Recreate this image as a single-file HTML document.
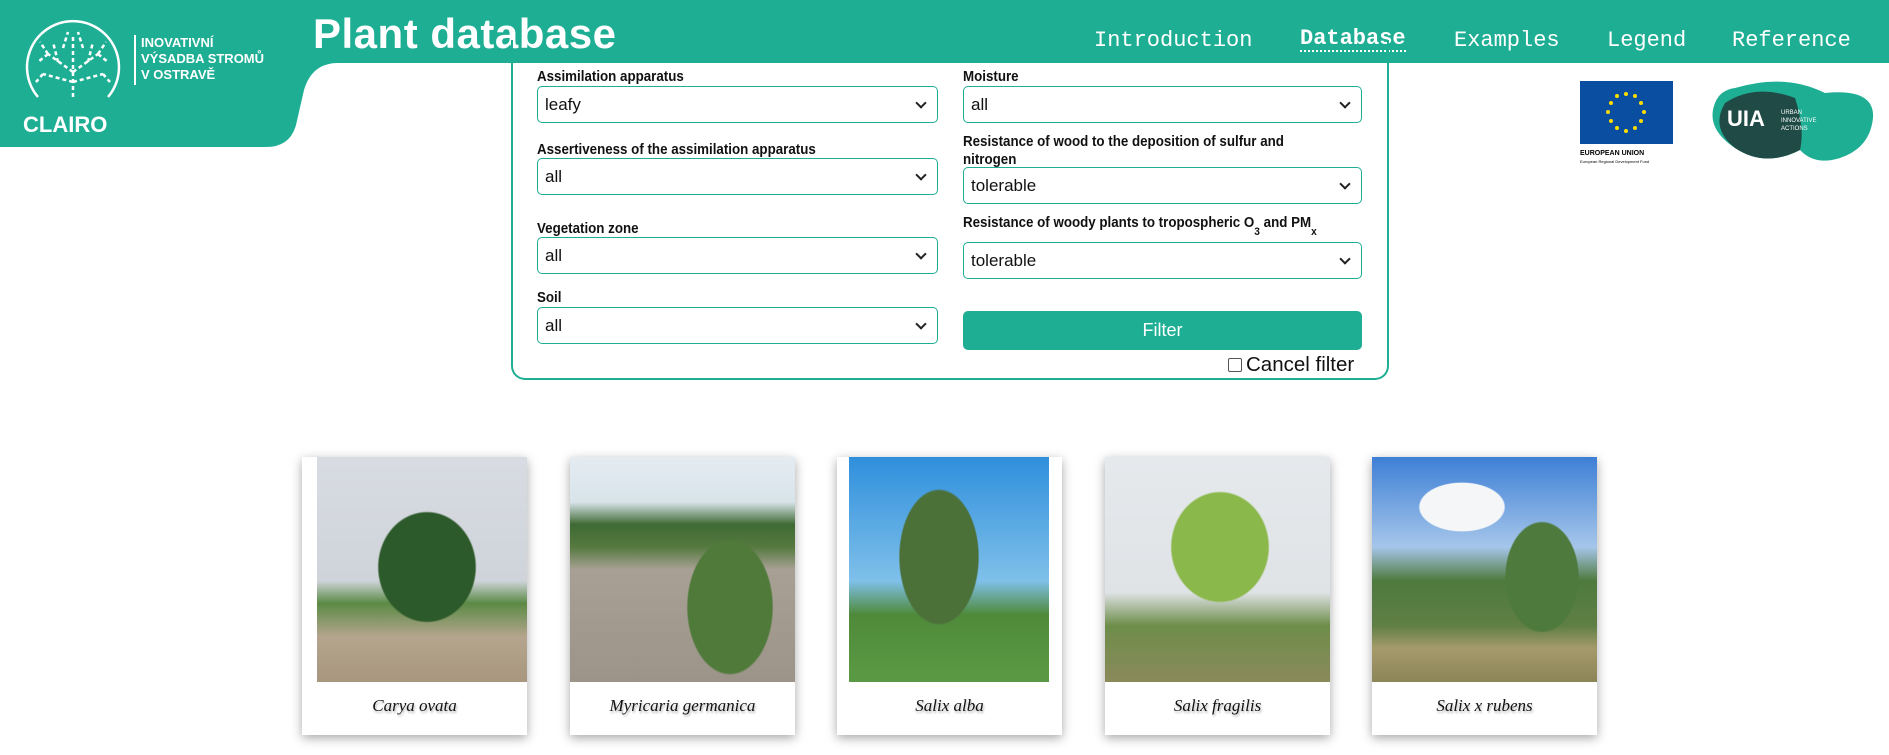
<!DOCTYPE html>
<html><head><meta charset="utf-8"><style>
*{box-sizing:border-box;margin:0;padding:0}
body{width:1889px;height:755px;overflow:hidden;background:#fff;font-family:"Liberation Sans",sans-serif;position:relative}
.bar{position:absolute;left:0;top:0;width:1889px;height:63px;background:#1eae94}
.logoblk{position:absolute;left:0;top:0;width:400px;height:147px;background:#1eae94;clip-path:path('M0 0 H400 V63 H338 Q312 63 304 90 L296 125 Q290 147 266 147 H0 Z')}
.title{position:absolute;left:313px;top:10px;color:#fff;font-weight:bold;font-size:42px;letter-spacing:0.5px}
.nav{position:absolute;top:28px;color:#fff;font-family:"Liberation Mono",monospace;font-size:22px}
.nav.b{font-weight:bold;border-bottom:2px dotted #fff;line-height:22px}
.form{position:absolute;left:511px;top:40px;width:878px;height:340px;border:2px solid #1eae94;border-top:none;border-radius:0 0 14px 14px}
.lbl{position:absolute;font-size:14.5px;font-weight:bold;color:#111;line-height:18px;transform:scaleX(0.92);transform-origin:left}
.sel{position:absolute;height:37px;border:1px solid #1eae94;border-radius:5px;font-size:17px;color:#111;padding:8px 7px;line-height:20px}
.sel:after{content:"";position:absolute;right:12px;top:12px;width:6px;height:6px;border-right:2px solid #222;border-bottom:2px solid #222;transform:rotate(45deg)}
.L{left:537px;width:401px}.R{left:963px;width:399px}
.btn{position:absolute;left:963px;top:311px;width:399px;height:39px;background:#1eae94;border-radius:5px;color:#fff;font-size:18px;text-align:center;line-height:39px}
.card{position:absolute;top:457px;width:225px;height:278px;background:#fff;box-shadow:0 3px 10px rgba(0,0,0,.35)}
.img{position:absolute;left:0;top:0;width:225px;height:225px}
.cap{position:absolute;left:0;top:696px;width:225px;text-align:center;font-family:"Liberation Serif",serif;font-style:italic;font-size:17px;color:#111;text-shadow:1px 2px 2px rgba(0,0,0,.3)}
</style></head><body>
<div class="bar"></div>
<div class="logoblk"></div>
<svg style="position:absolute;left:18px;top:12px" width="110" height="125" viewBox="0 0 110 125">
<path d="M20 85 A46 46 0 1 1 90 85" fill="none" stroke="#fff" stroke-width="2.5"/>
<g stroke="#fff" stroke-width="2.5" stroke-dasharray="4 3" fill="none">
<line x1="55" y1="25" x2="55" y2="88"/><path d="M55 60 L30 42 M55 60 L80 42 M55 70 L25 62 M55 70 L85 62 M40 50 L35 30 M70 50 L75 30 M30 42 L20 50 M80 42 L90 50 M45 36 L50 20 M65 36 L60 20 M30 42 L22 30 M80 42 L88 30 M25 62 L18 70 M85 62 L92 70"/>
</g>
<text x="5" y="120" fill="#fff" font-family="Liberation Sans" font-weight="bold" font-size="22">CLAIRO</text>
</svg>
<div style="position:absolute;left:134px;top:35px;width:2px;height:50px;background:#fff"></div>
<div style="position:absolute;left:141px;top:35px;color:#fff;font-weight:bold;font-size:13px;line-height:16px">INOVATIVNÍ<br>VÝSADBA STROMŮ<br>V OSTRAVĚ</div>
<div class="title">Plant database</div>
<div class="nav" style="left:1094px">Introduction</div>
<div class="nav b" style="left:1300px">Database</div>
<div class="nav" style="left:1454px">Examples</div>
<div class="nav" style="left:1607px">Legend</div>
<div class="nav" style="left:1732px">Reference</div>

<div class="form"></div>
<div class="lbl" style="left:537px;top:68px">Assimilation apparatus</div>
<div class="sel L" style="top:86px">leafy</div>
<div class="lbl" style="left:537px;top:141px">Assertiveness of the assimilation apparatus</div>
<div class="sel L" style="top:158px">all</div>
<div class="lbl" style="left:537px;top:220px">Vegetation zone</div>
<div class="sel L" style="top:237px">all</div>
<div class="lbl" style="left:537px;top:289px">Soil</div>
<div class="sel L" style="top:307px">all</div>
<div class="lbl" style="left:963px;top:68px">Moisture</div>
<div class="sel R" style="top:86px">all</div>
<div class="lbl" style="left:963px;top:133px">Resistance of wood to the deposition of sulfur and<br>nitrogen</div>
<div class="sel R" style="top:167px">tolerable</div>
<div class="lbl" style="left:963px;top:214px">Resistance of woody plants to tropospheric O<sub style="font-size:11px;position:relative;top:8px;vertical-align:baseline">3</sub> and PM<sub style="font-size:11px;position:relative;top:8px;vertical-align:baseline">x</sub></div>
<div class="sel R" style="top:242px">tolerable</div>
<div class="btn">Filter</div>
<div style="position:absolute;left:1228px;top:354px;font-size:20.5px;color:#111;line-height:22px"><span style="display:inline-block;width:14px;height:14px;border:1px solid #555;border-radius:2px;margin-right:4px;vertical-align:-1px"></span>Cancel filter</div>

<svg style="position:absolute;left:1580px;top:81px" width="95" height="85"><rect x="0" y="0" width="93" height="63" fill="#0a4ea2"/><g fill="#ffdd00"><circle cx="46" cy="13" r="2"/><circle cx="46" cy="50" r="2"/><circle cx="28" cy="31" r="2"/><circle cx="64" cy="31" r="2"/><circle cx="37" cy="15" r="2"/><circle cx="55" cy="15" r="2"/><circle cx="37" cy="47" r="2"/><circle cx="55" cy="47" r="2"/><circle cx="31" cy="22" r="2"/><circle cx="61" cy="22" r="2"/><circle cx="31" cy="40" r="2"/><circle cx="61" cy="40" r="2"/></g><text x="0" y="74" font-size="7" font-weight="bold" font-family="Liberation Sans">EUROPEAN UNION</text><text x="0" y="82" font-size="4" font-family="Liberation Sans">European Regional Development Fund</text></svg>
<svg style="position:absolute;left:1705px;top:78px" width="172" height="88"><path d="M30 10 Q80 -5 120 15 Q170 10 168 40 Q165 70 135 80 Q110 88 95 72 Q60 90 30 70 Q0 50 10 25 Q15 12 30 10Z" fill="#1eae94"/><path d="M20 25 Q50 5 90 20 Q100 50 95 72 Q60 90 30 70 Q5 50 20 25Z" fill="#1f4a45"/><text x="22" y="48" fill="#fff" font-weight="bold" font-size="22" font-family="Liberation Sans">UIA</text><text x="76" y="36" fill="#fff" font-size="6" font-family="Liberation Sans">URBAN</text><text x="76" y="44" fill="#fff" font-size="6" font-family="Liberation Sans">INNOVATIVE</text><text x="76" y="52" fill="#fff" font-size="6" font-family="Liberation Sans">ACTIONS</text></svg>

<div class="card" style="left:302px"><div class="img" style="background:radial-gradient(ellipse 80px 90px at 110px 110px,#2d5a2a 60%,transparent 62%),linear-gradient(#d8dce2 0,#cfd4da 55%,#5b8a45 65%,#b5a58e 80%,#a8977e 100%);width:210px;left:15px"></div><div class="cap" style="top:239px">Carya ovata</div></div>
<div class="card" style="left:570px"><div class="img" style="background:radial-gradient(ellipse 70px 110px at 160px 150px,#4f7a3a 60%,transparent 62%),linear-gradient(#e4ecf2 0,#d8e4ea 20%,#3f6a34 30%,#55793f 40%,#a8a094 50%,#9c9488 100%)"></div><div class="cap" style="top:239px">Myricaria germanica</div></div>
<div class="card" style="left:837px"><div class="img" style="background:radial-gradient(ellipse 65px 110px at 90px 100px,#4b7038 60%,transparent 62%),linear-gradient(#2f8fdc 0,#7fc0ea 55%,#4f8a3a 70%,#5b9a44 100%);left:12px;width:200px"></div><div class="cap" style="top:239px">Salix alba</div></div>
<div class="card" style="left:1105px"><div class="img" style="background:radial-gradient(ellipse 80px 90px at 115px 90px,#8ab84a 60%,transparent 62%),linear-gradient(#e6e9ec 0,#dfe3e6 60%,#6e8d4a 75%,#8a8a5a 100%)"></div><div class="cap" style="top:239px">Salix fragilis</div></div>
<div class="card" style="left:1372px"><div class="img" style="background:radial-gradient(ellipse 60px 90px at 170px 120px,#4e7a3e 60%,transparent 62%),radial-gradient(ellipse 70px 40px at 90px 50px,#f4f6f8 60%,transparent 62%),linear-gradient(#3d7fd6 0,#a6c6ea 40%,#4e7a3e 55%,#5f7f45 75%,#a59a6a 85%,#8c8558 100%)"></div><div class="cap" style="top:239px">Salix x rubens</div></div>
</body></html>
